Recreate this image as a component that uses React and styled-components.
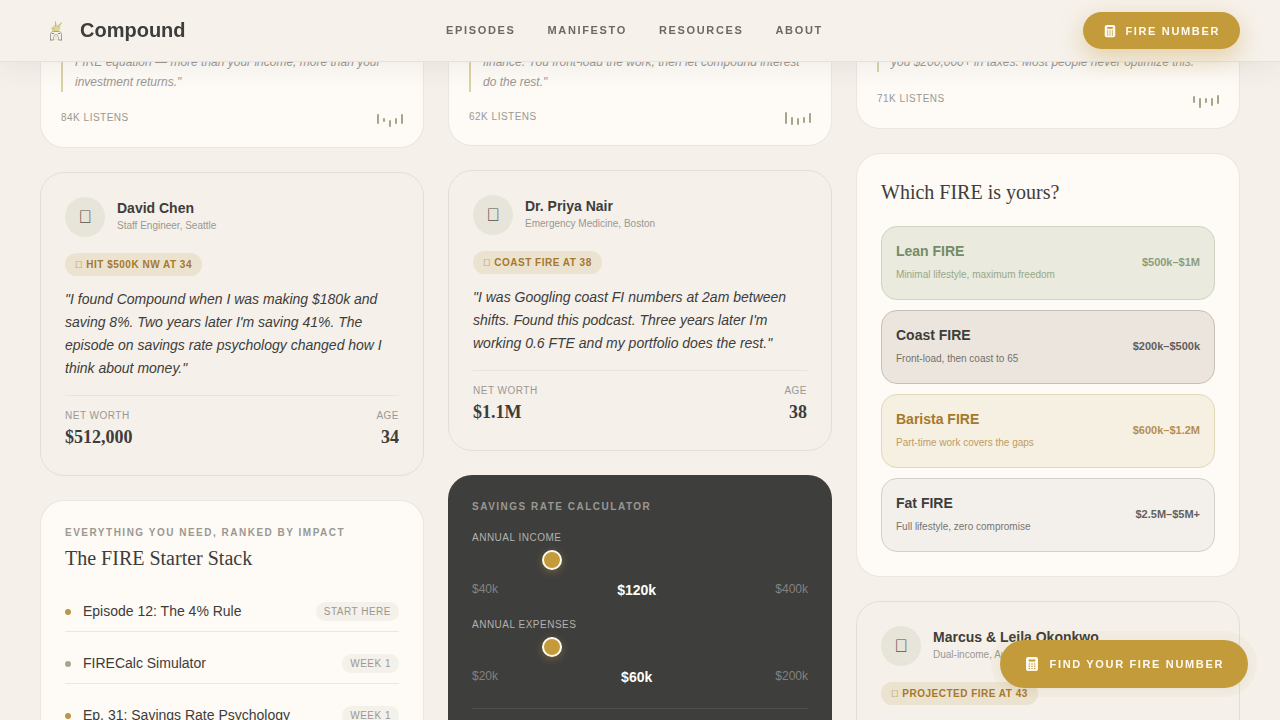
import React, { useState } from "react";
import styled, { createGlobalStyle } from "styled-components";

const sans = `"Liberation Sans", Arial, sans-serif`;
const serif = `"Liberation Serif", "Times New Roman", serif`;

const c = {
  page: "#f5f0ea",
  card: "#fefaf5",
  ink: "#3d3d3b",
  nav: "#6b6963",
  muted: "#9a9893",
  gold: "#c49b3a",
  bronze: "#a6782c",
  line: "rgba(61, 61, 61, 0.1)",
};

const GlobalStyle = createGlobalStyle`
  *, *::before, *::after { box-sizing: border-box; }
  body {
    margin: 0;
    background: ${c.page};
    color: ${c.ink};
    font-family: ${sans};
  }
  h2, h3, p, ul, blockquote, dl, dd { margin: 0; padding: 0; }
  button { font-family: inherit; border: 0; cursor: pointer; }
`;

const Header = styled.header`
  position: fixed;
  inset: 0 0 auto 0;
  z-index: 10;
  display: flex;
  align-items: center;
  justify-content: space-between;
  padding: 12px 40px;
  background: #f6f1eb;
  border-bottom: 1px solid #e6e1db;
  box-shadow: 0 4px 30px rgba(61, 61, 61, 0.08);
`;

const Brand = styled.a`
  display: flex;
  align-items: center;
  gap: 8px;
  color: ${c.ink};
  font-size: 20px;
  font-weight: 700;
  line-height: 33px;
  text-decoration: none;
`;

const Nav = styled.nav`
  display: flex;
  gap: 32px;
`;

const NavLink = styled.a`
  color: ${c.nav};
  font-size: 11px;
  font-weight: 700;
  letter-spacing: 0.15em;
  line-height: 17px;
  text-decoration: none;
  text-transform: uppercase;
`;

const GoldButton = styled.button`
  display: flex;
  align-items: center;
  gap: ${(p) => (p.$large ? "10px" : "8px")};
  padding: ${(p) => (p.$large ? "0 24px" : "0 20px")};
  height: ${(p) => (p.$large ? "48px" : "37px")};
  border-radius: 24px;
  background: ${c.gold};
  color: #fffaf0;
  font-size: 11px;
  font-weight: 700;
  letter-spacing: 0.15em;
  text-transform: uppercase;
  white-space: nowrap;
  box-shadow: ${(p) =>
    p.$large
      ? "0 0 0 9px rgba(196, 155, 58, 0.05), 0 2px 10px rgba(61, 61, 61, 0.05)"
      : "0 8px 24px rgba(196, 155, 58, 0.4)"};
`;

const FloatingAction = styled.div`
  position: fixed;
  right: 32px;
  bottom: 32px;
  z-index: 11;
`;

const Columns = styled.main`
  display: grid;
  grid-template-columns: repeat(3, minmax(0, 1fr));
  align-items: start;
  gap: 24px;
  padding: 0 40px;
`;

const Column = styled.div`
  display: grid;
  gap: 24px;
`;

const Card = styled.section`
  min-height: 240px;
  padding: 24px;
  border: 1px solid ${c.line};
  border-radius: 24px;
  background: ${(p) => (p.$plain ? "transparent" : c.card)};
`;

const EpisodeCard = styled.article`
  padding: 51px 20px 20px;
  border: 1px solid ${c.line};
  border-radius: 24px;
  background: ${c.card};
`;

const Pull = styled.blockquote`
  padding-left: 12px;
  border-left: 2px solid #d9d3a6;
  color: ${c.muted};
  font-size: 12px;
  font-style: italic;
  line-height: 20px;
`;

const EpisodeFoot = styled.div`
  display: flex;
  align-items: center;
  justify-content: space-between;
  margin-top: 16px;
`;

const Caption = styled.span`
  color: ${c.muted};
  font-size: 10px;
  letter-spacing: 0.05em;
  line-height: 15px;
  text-transform: uppercase;
`;

const Wave = styled.svg`
  display: block;
`;

const Person = styled.div`
  display: flex;
  align-items: center;
  gap: 12px;
`;

const Avatar = styled.span`
  display: grid;
  place-items: center;
  flex: none;
  width: 40px;
  height: 40px;
  border-radius: 50%;
  background: #e7e4d9;
  color: #55534b;
  font-size: 18px;
  line-height: 28px;
`;

const PersonName = styled.h3`
  font-size: 14px;
  font-weight: 700;
  line-height: 17px;
`;

const PersonRole = styled.p`
  color: ${c.muted};
  font-size: 10px;
  line-height: 17px;
`;

const Milestone = styled.p`
  width: fit-content;
  margin-top: 16px;
  padding: 4px 10px;
  border-radius: 12px;
  background: #ebe3d0;
  color: ${c.bronze};
  font-size: 10px;
  font-weight: 700;
  letter-spacing: 0.05em;
  line-height: 15px;
  text-transform: uppercase;
`;

const Quote = styled.blockquote`
  margin-top: 12px;
  font-size: 14px;
  font-style: italic;
  line-height: 23px;
`;

const Stats = styled.dl`
  display: flex;
  justify-content: space-between;
  margin-top: 15px;
  padding-top: 12px;
  border-top: 1px solid rgba(61, 61, 61, 0.07);
`;

const Stat = styled.div`
  text-align: ${(p) => (p.$end ? "right" : "left")};
`;

const StatLabel = styled.dt`
  color: ${c.muted};
  font-size: 10px;
  letter-spacing: 0.05em;
  line-height: 15px;
  text-transform: uppercase;
`;

const StatValue = styled.dd`
  font-family: ${serif};
  font-size: 18px;
  font-weight: 700;
  line-height: 28px;
`;

const Eyebrow = styled.p`
  color: ${c.muted};
  font-size: 10px;
  font-weight: 700;
  letter-spacing: 0.15em;
  line-height: 15px;
  text-transform: uppercase;
`;

const Title = styled.h2`
  margin-top: ${(p) => (p.$spaced ? "4px" : "0")};
  margin-bottom: 20px;
  font-family: ${serif};
  font-size: 20px;
  font-weight: 400;
  line-height: 28px;
`;

const StackList = styled.ul`
  display: grid;
  gap: 12px;
  list-style: none;
`;

const StackItem = styled.li`
  display: flex;
  align-items: center;
  gap: 12px;
  padding: 8px 0;
  border-bottom: 1px solid ${c.line};
  font-size: 14px;
  line-height: 23px;
`;

const Dot = styled.span`
  width: 6px;
  height: 6px;
  border-radius: 50%;
  background: ${(p) => p.$color};
`;

const Tag = styled.span`
  margin-left: auto;
  padding: 2px 8px;
  border-radius: 10px;
  background: #f4f0ea;
  color: ${c.muted};
  font-size: 10px;
  letter-spacing: 0.05em;
  line-height: 15px;
  text-transform: uppercase;
`;

const Calculator = styled.section`
  padding: 24px;
  border-radius: 24px;
  background: #3e3e3d;
`;

const Field = styled.div`
  display: grid;
  margin-top: 16px;
`;

const FieldLabel = styled.label`
  color: #b3b1ad;
  font-size: 10px;
  letter-spacing: 0.05em;
  line-height: 15px;
  text-transform: uppercase;
`;

const Slider = styled.input`
  appearance: none;
  width: 100%;
  height: 20px;
  margin: 5px 0 10px;
  background: transparent;

  &::-webkit-slider-thumb {
    appearance: none;
    width: 20px;
    height: 20px;
    border: 2px solid #fffaf0;
    border-radius: 50%;
    background: ${c.gold};
    box-shadow: 0 2px 8px rgba(196, 155, 58, 0.4);
  }
`;

const Scale = styled.div`
  display: flex;
  align-items: flex-start;
  justify-content: space-between;
  color: #838280;
  font-size: 12px;
  line-height: 18px;
`;

const Amount = styled.output`
  color: #fffdf8;
  font-size: 14px;
  font-weight: 700;
  line-height: 21px;
`;

const Rule = styled.hr`
  width: 100%;
  margin: 20px 0 24px;
  border: 0;
  border-top: 1px solid rgba(255, 255, 255, 0.1);
`;

const Choices = styled.div`
  display: grid;
  gap: 10px;
`;

const Choice = styled.button`
  display: flex;
  align-items: center;
  justify-content: space-between;
  padding: 14px;
  border: 1px solid ${(p) => p.$tone.border};
  border-radius: 16px;
  background: ${(p) => p.$tone.fill};
  color: ${(p) => p.$tone.text};
  text-align: left;
`;

const ChoiceName = styled.span`
  display: block;
  font-size: 14px;
  font-weight: 700;
  line-height: 21px;
`;

const ChoiceNote = styled.span`
  display: block;
  margin-top: 3px;
  font-size: 10px;
  line-height: 20px;
  opacity: 0.7;
`;

const ChoiceRange = styled.span`
  padding-bottom: 2px;
  font-size: 11px;
  font-weight: 700;
  line-height: 16px;
  opacity: 0.8;
`;

const Flame = () => (
  <svg width="32" height="32" viewBox="0 0 32 32" fill="none" aria-hidden="true">
    <path d="M12 16l-1-4 2 1 .5-3 1.500 1 .5-4 2 3.500 4.500-3-2 4 .5 2-2 3z" fill="#ddd59c" />
    <path d="M15.500 6.500v5 M21.500 7.500l-4 4.500 M12.500 12l2 3" stroke="#c4b76f" />
    <path
      d="M10.500 25v-5c0-2 1-3.500 3-3.500h5c2 0 3 1.500 3 3.500v5"
      stroke="#a39f95"
    />
    <path d="M13.500 25v-2.500c0-4 5-4 5 0v2.500" fill="#f0e9d2" stroke="#b9b4a8" />
    <path d="M10 25h3.500 M18.500 25h3.500" stroke="#8f8b82" />
    <path d="M12 18.500h2 M18 18.500h2" stroke="#8f8b82" />
  </svg>
);

const CalculatorIcon = ({ size }) => (
  <svg width={size} height={size} viewBox="0 0 16 16" aria-hidden="true">
    <rect x="2" y="1" width="12" height="14" rx="2.2" fill="currentColor" />
    <rect x="4.700" y="3.500" width="6.600" height="2" rx="0.400" fill={c.gold} />
    {[8, 10.3, 12.6].map((y) =>
      [5.3, 8, 10.7].map((x) => (
        <circle key={`${x}-${y}`} cx={x} cy={y} r="0.750" fill={c.gold} />
      ))
    )}
  </svg>
);

const episodes = {
  savings: {
    text: "FIRE equation — more than your income, more than your investment returns.\"",
    listens: "84K listens",
    height: 19,
    bars: [[6, 10], [10, 4], [12, 7], [10, 6], [6, 10]],
  },
  coast: {
    text: "finance. You front-load the work, then let compound interest do the rest.\"",
    listens: "62K listens",
    height: 17,
    bars: [[4, 12], [9, 8], [10, 7], [9, 6], [5, 10]],
  },
  taxes: {
    text: "you $200,000+ in taxes. Most people never optimize this.\"",
    listens: "71K listens",
    height: 20,
    bars: [[8, 7], [10, 10], [10, 5], [10, 8], [7, 9]],
  },
};

function Episode({ data }) {
  return (
    <EpisodeCard>
      <Pull>{data.text}</Pull>
      <EpisodeFoot>
        <Caption>{data.listens}</Caption>
        <Wave width="26" height={data.height} aria-hidden="true">
          {data.bars.map(([y, h], i) => (
            <rect key={i} x={i * 6} y={y} width="2" height={h} rx="1" fill="#a3a58c" />
          ))}
        </Wave>
      </EpisodeFoot>
    </EpisodeCard>
  );
}

function Testimonial({ icon, name, role, badgeIcon, badge, quote, worth, age }) {
  return (
    <Card $plain>
      <Person>
        <Avatar>{icon}</Avatar>
        <div>
          <PersonName>{name}</PersonName>
          <PersonRole>{role}</PersonRole>
        </div>
      </Person>
      <Milestone>
        {badgeIcon} {badge}
      </Milestone>
      {quote && <Quote>{quote}</Quote>}
      {worth && (
        <Stats>
          <Stat>
            <StatLabel>Net worth</StatLabel>
            <StatValue>{worth}</StatValue>
          </Stat>
          <Stat $end>
            <StatLabel>Age</StatLabel>
            <StatValue>{age}</StatValue>
          </Stat>
        </Stats>
      )}
    </Card>
  );
}

function MoneySlider({ id, label, min, max, initial }) {
  const [value, setValue] = useState(initial);
  return (
    <Field>
      <FieldLabel htmlFor={id}>{label}</FieldLabel>
      <Slider
        id={id}
        type="range"
        min={min}
        max={max}
        value={value}
        onChange={(e) => setValue(Number(e.target.value))}
      />
      <Scale>
        <span>${min}k</span>
        <Amount htmlFor={id}>${value}k</Amount>
        <span>${max}k</span>
      </Scale>
    </Field>
  );
}

const stack = [
  { name: "Episode 12: The 4% Rule", tag: "Start here", color: "#b8974a" },
  { name: "FIRECalc Simulator", tag: "Week 1", color: "#a5a593" },
  { name: "Ep. 31: Savings Rate Psychology", tag: "Week 1", color: "#b8974a" },
];

const types = [
  {
    name: "Lean FIRE",
    note: "Minimal lifestyle, maximum freedom",
    range: "$500k–$1M",
    tone: { fill: "#eaeade", border: "#d0d4c0", text: "#748c66" },
  },
  {
    name: "Coast FIRE",
    note: "Front-load, then coast to 65",
    range: "$200k–$500k",
    tone: { fill: "#ece5dd", border: "#c6c0b9", text: c.ink },
  },
  {
    name: "Barista FIRE",
    note: "Part-time work covers the gaps",
    range: "$600k–$1.2M",
    tone: { fill: "#f6f0e2", border: "#e2d8b6", text: c.bronze },
  },
  {
    name: "Fat FIRE",
    note: "Full lifestyle, zero compromise",
    range: "$2.5M–$5M+",
    tone: { fill: "#f3f0ec", border: "#d3d0cc", text: c.ink },
  },
];

export default function App() {
  return (
    <>
      <GlobalStyle />
      <Header>
        <Brand href="#home">
          <Flame />
          Compound
        </Brand>
        <Nav>
          {["Episodes", "Manifesto", "Resources", "About"].map((item) => (
            <NavLink key={item} href={`#${item.toLowerCase()}`}>
              {item}
            </NavLink>
          ))}
        </Nav>
        <GoldButton type="button">
          <CalculatorIcon size={14} />
          Fire number
        </GoldButton>
      </Header>

      <Columns>
        <Column>
          <Episode data={episodes.savings} />
          <Testimonial
            icon={"\uE900"}
            name="David Chen"
            role="Staff Engineer, Seattle"
            badgeIcon={"\uE901"}
            badge="Hit $500K NW at 34"
            quote={`"I found Compound when I was making $180k and saving 8%. Two years later I'm saving 41%. The episode on savings rate psychology changed how I think about money."`}
            worth="$512,000"
            age="34"
          />
          <Card>
            <Eyebrow>Everything you need, ranked by impact</Eyebrow>
            <Title $spaced>The FIRE Starter Stack</Title>
            <StackList>
              {stack.map((item) => (
                <StackItem key={item.name}>
                  <Dot $color={item.color} />
                  {item.name}
                  <Tag>{item.tag}</Tag>
                </StackItem>
              ))}
            </StackList>
          </Card>
        </Column>

        <Column>
          <Episode data={episodes.coast} />
          <Testimonial
            icon={"\uE900"}
            name="Dr. Priya Nair"
            role="Emergency Medicine, Boston"
            badgeIcon={"\uE901"}
            badge="Coast FIRE at 38"
            quote={`"I was Googling coast FI numbers at 2am between shifts. Found this podcast. Three years later I'm working 0.6 FTE and my portfolio does the rest."`}
            worth="$1.1M"
            age="38"
          />
          <Calculator>
            <Eyebrow>Savings rate calculator</Eyebrow>
            <MoneySlider id="income" label="Annual income" min={40} max={400} initial={120} />
            <MoneySlider id="expenses" label="Annual expenses" min={20} max={200} initial={60} />
            <Rule />
          </Calculator>
        </Column>

        <Column>
          <Episode data={episodes.taxes} />
          <Card>
            <Title>Which FIRE is yours?</Title>
            <Choices>
              {types.map((type) => (
                <Choice key={type.name} type="button" $tone={type.tone}>
                  <span>
                    <ChoiceName>{type.name}</ChoiceName>
                    <ChoiceNote>{type.note}</ChoiceNote>
                  </span>
                  <ChoiceRange>{type.range}</ChoiceRange>
                </Choice>
              ))}
            </Choices>
          </Card>
          <Testimonial
            icon={"\uE900"}
            name="Marcus & Leila Okonkwo"
            role="Dual-income, Austin"
            badgeIcon={"\uE901"}
            badge="Projected FIRE at 43"
          />
        </Column>
      </Columns>

      <FloatingAction>
        <GoldButton type="button" $large>
          <CalculatorIcon size={16} />
          Find your fire number
        </GoldButton>
      </FloatingAction>
    </>
  );
}
